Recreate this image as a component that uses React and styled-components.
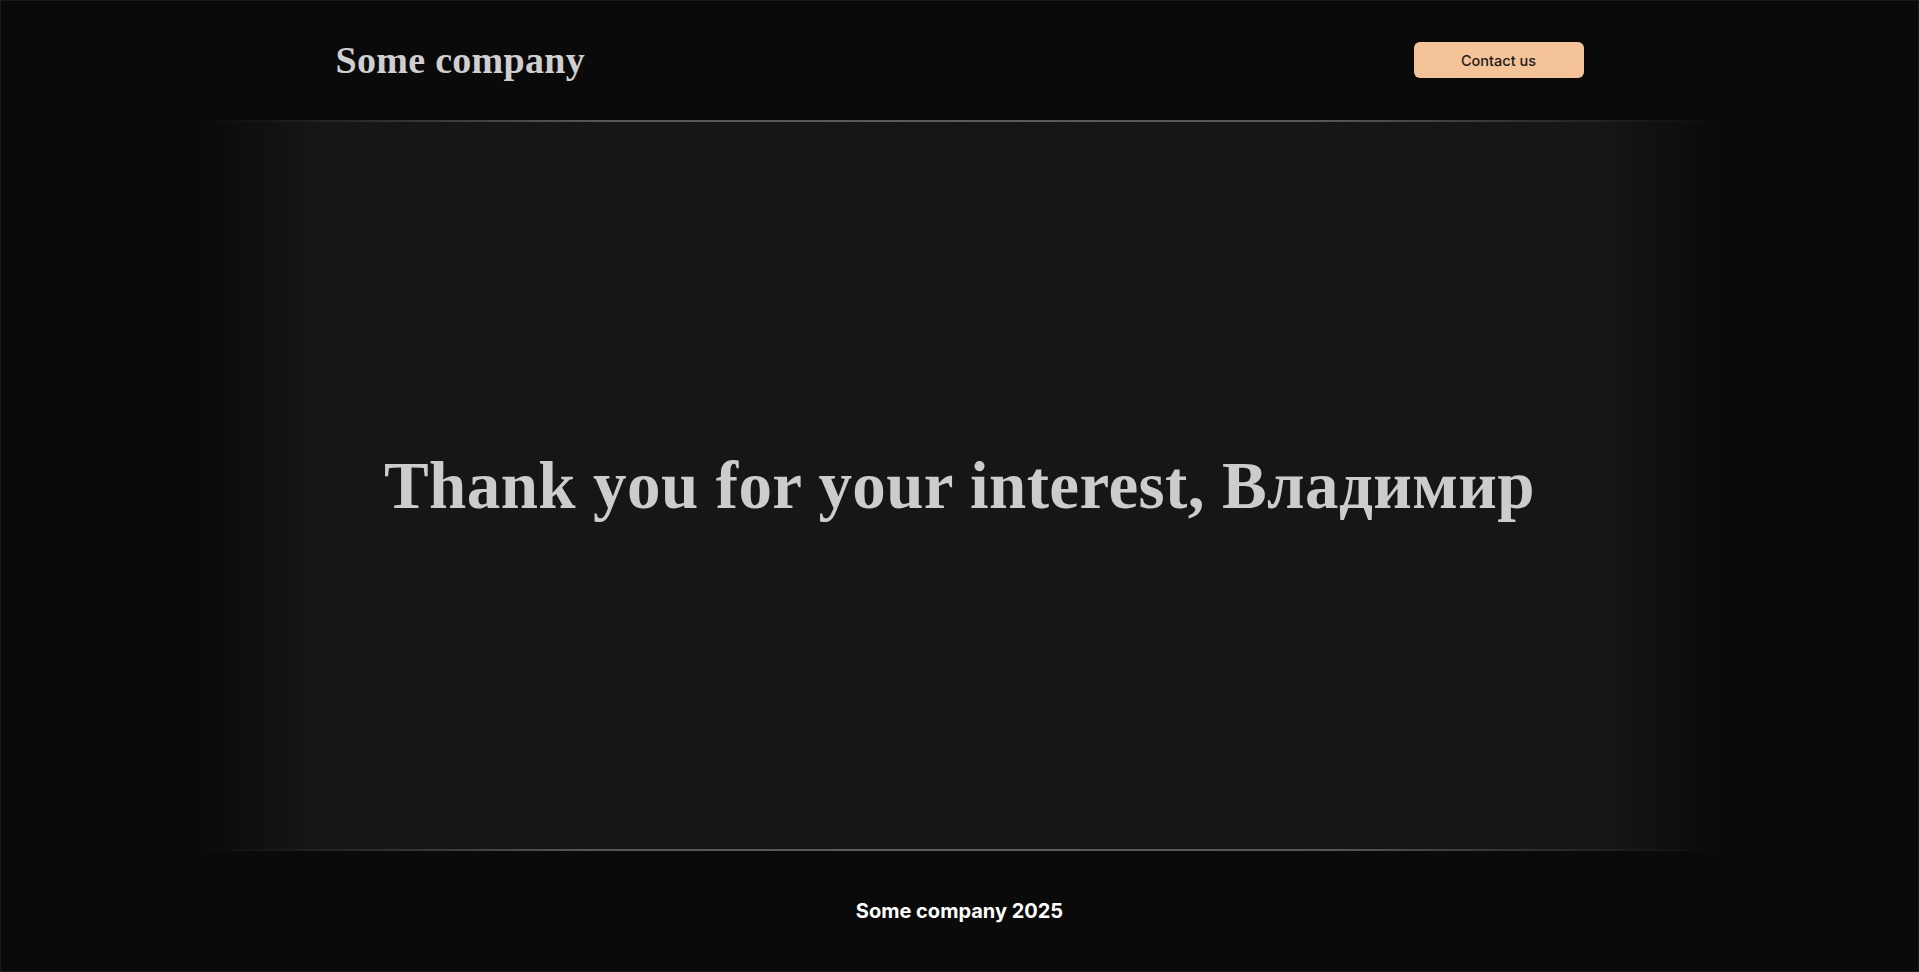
import React from 'react';
import styled, { createGlobalStyle } from 'styled-components';

const GlobalStyle = createGlobalStyle`
    * {
        box-sizing: border-box;
    }
    html, body {
        margin: 0;
        padding: 0;
        height: 100%;
        background: #0a0a0a;
    }
    #root {
        min-height: 100%;
    }
`

const Page = styled.div`
    min-height: 100vh;
    display: flex;
    flex-direction: column;
    background: #0a0a0a;
    border: 1px solid #1a1a1a;
`

const Header = styled.header`
    height: 119px;
    display: flex;
    justify-content: center;
`

const Container = styled.div`
    width: 1248px;
    display: flex;
    align-items: center;
    justify-content: space-between;
`

const Logo = styled.a`
    font-family: "Liberation Serif", "DejaVu Serif", serif;
    font-weight: 700;
    font-size: 38px;
    color: #cfcfcf;
    text-decoration: none;
    letter-spacing: 0.3px;
    margin-top: -2px;
`

const ContactButton = styled.button`
    width: 170px;
    height: 36px;
    border: none;
    border-radius: 6px;
    background: #f4c398;
    color: #1a1a1a;
    font-family: Inter, "Liberation Sans", sans-serif;
    font-weight: 500;
    font-size: 14.5px;
    padding-top: 2px;
    cursor: pointer;
    margin-top: -2px;
`

const Divider = styled.div`
    width: 1523px;
    height: 2px;
    align-self: center;
    background: linear-gradient(
        to right,
        rgba(90, 90, 90, 0) 0%,
        #555555 25%,
        #5c5c5c 50%,
        #555555 75%,
        rgba(90, 90, 90, 0) 100%
    );
`

const Main = styled.main`
    width: 1523px;
    height: 727px;
    align-self: center;
    display: flex;
    align-items: center;
    justify-content: center;
    background: linear-gradient(
        to right,
        #0a0a0a 0%,
        #161616 8%,
        #161616 92%,
        #0a0a0a 100%
    );
`

const Title = styled.h1`
    margin: 0;
    font-family: "Liberation Serif", "DejaVu Serif", serif;
    font-weight: 700;
    font-size: 67px;
    color: #cccccc;
    letter-spacing: 0.4px;
`

const Footer = styled.footer`
    flex: 1;
    display: flex;
    align-items: center;
    justify-content: center;
`

const FooterText = styled.p`
    margin: 0;
    font-family: Inter, "Liberation Sans", sans-serif;
    font-weight: 700;
    font-size: 20px;
    color: #ffffff;
`

const App = () => {
    return (
        <>
            <GlobalStyle />
            <Page>
                <Header>
                    <Container>
                        <Logo href="#">Some company</Logo>
                        <ContactButton>Contact us</ContactButton>
                    </Container>
                </Header>
                <Divider />
                <Main>
                    <Title>Thank you for your interest, Владимир</Title>
                </Main>
                <Divider />
                <Footer>
                    <FooterText>Some company 2025</FooterText>
                </Footer>
            </Page>
        </>
    )
}

export default App;
